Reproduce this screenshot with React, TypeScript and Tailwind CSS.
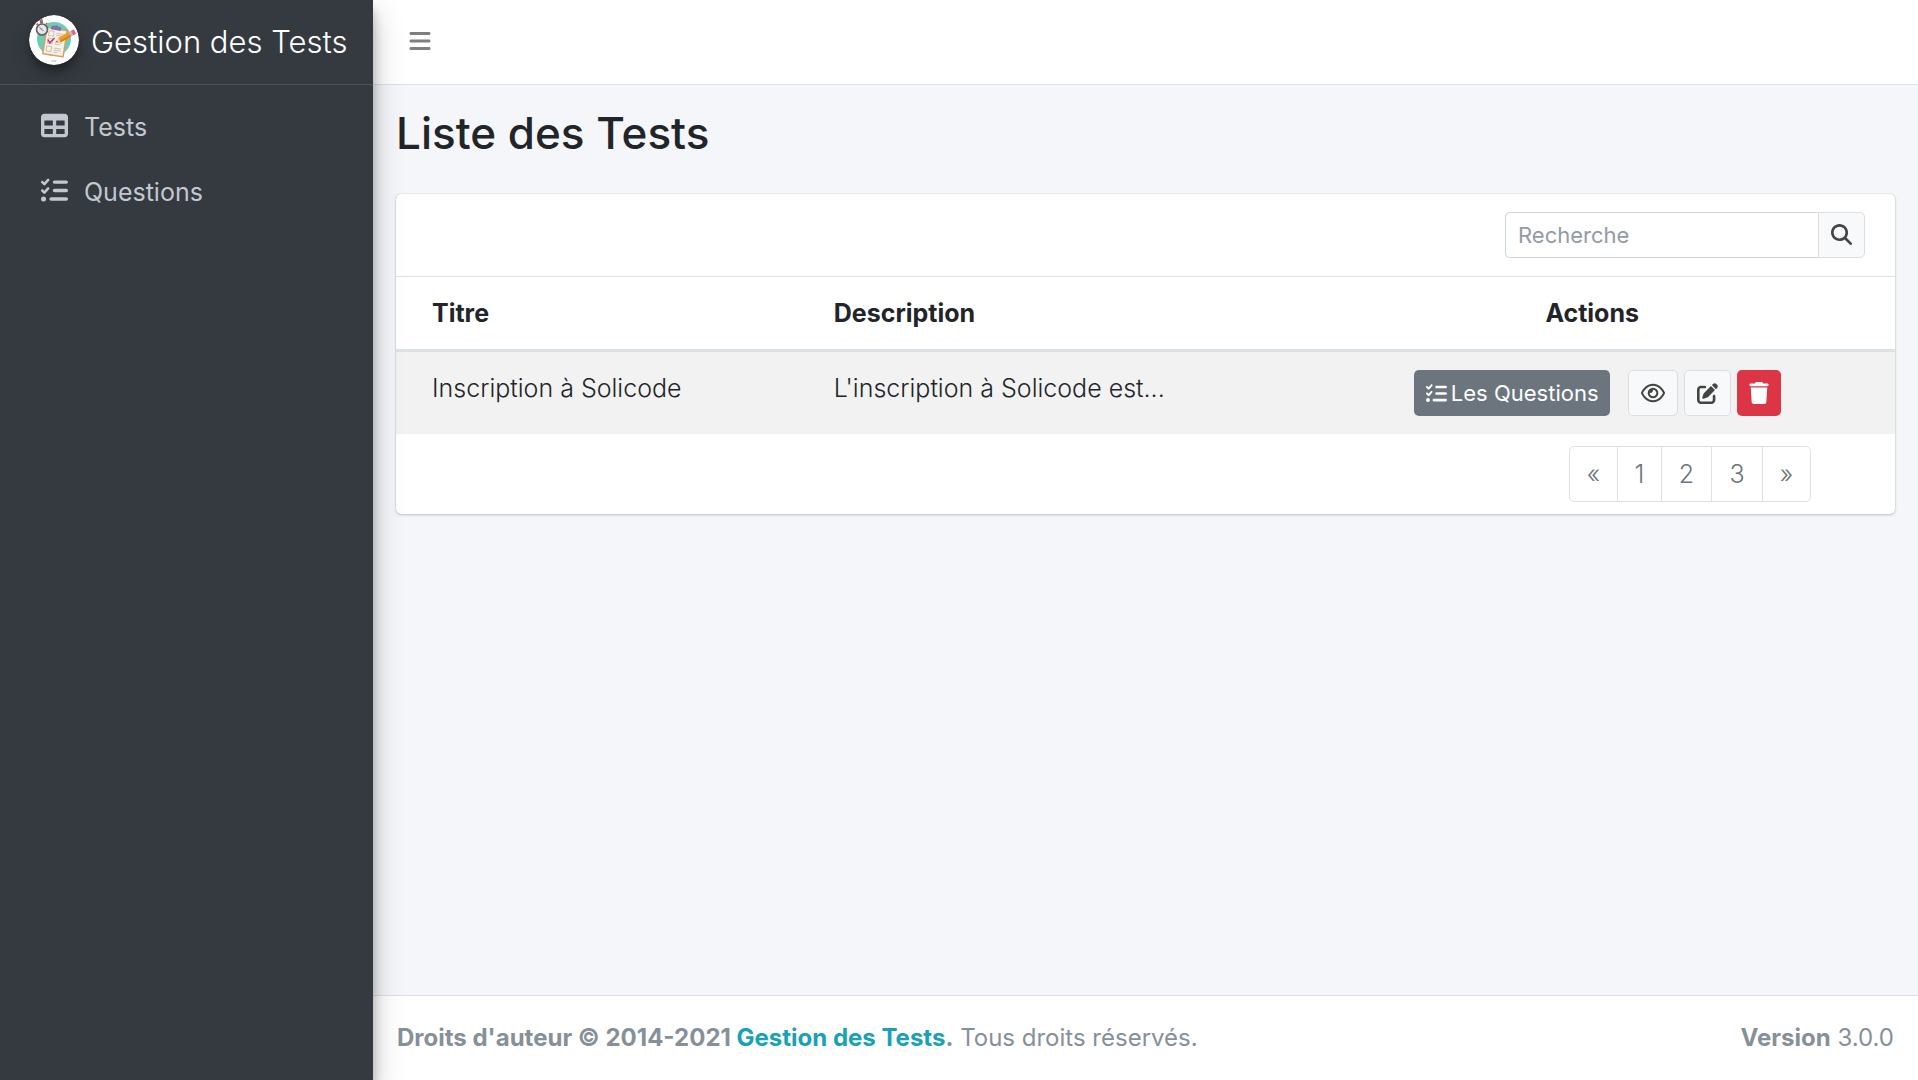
import {
  FaBars,
  FaListCheck,
  FaMagnifyingGlass,
  FaPenToSquare,
  FaRegEye,
  FaTable,
  FaTrash,
} from "react-icons/fa6";

function Logo() {
  return (
    <svg viewBox="0 0 50 50" className="mb-1 size-[50px] shrink-0 rounded-full shadow-[0_10px_20px_rgba(0,0,0,0.19),0_6px_6px_rgba(0,0,0,0.23)]" aria-hidden="true">
      <circle cx="25" cy="25" r="25" fill="#fff" />
      <circle cx="25" cy="24" r="17" fill="#6bcdb9" />
      <g transform="rotate(9 25 27)">
        <rect x="15" y="13" width="22" height="28" rx="1" fill="#d9a066" />
        <rect x="16.5" y="14.5" width="19" height="25" fill="#fbf1e6" />
        <path d="M20 15v-2.500q0-1.500 2-1.500h1.500q1.500-2 3 0H28q2 0 2 1.500V15z" fill="#7b74ad" />
        <g fill="none" stroke="#b9b0a6" strokeWidth="0.700">
          <rect x="18.500" y="16.500" width="5" height="5" />
          <rect x="18.500" y="24" width="5" height="5" />
          <rect x="18.500" y="32" width="5" height="5" />
          <path d="M26 18h7M26 20h5M26 27h7M26 29h5M26 33h7M26 35h7M26 37h4" />
        </g>
        <path d="m18.500 25.500 2.500 3 4-5.500" fill="none" stroke="#d8256b" strokeWidth="1.400" />
      </g>
      <g transform="translate(27 27) rotate(-29)">
        <path d="m0 0 4-2.600v5.200z" fill="#f6cfa0" />
        <path d="m0 0 1.500-1v2z" fill="#a33b5c" />
        <rect x="4" y="-2.600" width="12" height="5.200" fill="#f59a23" />
        <rect x="4" y="0.800" width="12" height="1.800" fill="#dd7d12" />
        <rect x="16" y="-2.600" width="2.200" height="5.200" fill="#b7bcc4" />
        <rect x="18.200" y="-2.600" width="3.500" height="5.200" rx="1" fill="#e0628f" />
      </g>
      <rect x="11" y="5.500" width="3" height="3" fill="#777" transform="rotate(-10 12 7)" />
      <path d="m7.500 10 1.500-1.500M17 8l1 1" stroke="#d9503f" strokeWidth="1.600" />
      <path d="m10.500 5.500 3-1" stroke="#d9503f" strokeWidth="1.400" />
      <circle cx="13" cy="14.500" r="5.500" fill="#e4e5e6" stroke="#5c5f63" strokeWidth="1.600" />
      <path d="m10.500 12.500 2.500 2 1.500 1.500" fill="none" stroke="#444" strokeWidth="0.800" />
      <path d="M22.500 46h5" stroke="#c4c4c4" strokeWidth="1.400" strokeDasharray="1.300 0.400" />
    </svg>
  );
}

const lightButton =
  "flex h-[46px] items-center justify-center rounded-[5px] border border-[#ddd] bg-[#f8f9fa] text-[#444]";

export default function App() {
  return (
    <div className="flex min-h-screen bg-[#f4f6f9] font-['Inter','Liberation_Sans',sans-serif] text-[25px] leading-9 font-light text-[#212529]">
      <aside className="relative z-10 w-[373px] shrink-0 bg-[#343a40] shadow-[0_14px_28px_rgba(0,0,0,0.25),0_10px_10px_rgba(0,0,0,0.22)]">
        <a href="#accueil" className="flex h-[85px] items-center gap-3 border-b border-[#4b545c] pl-[29px] text-[31px] font-light whitespace-nowrap text-white">
          <Logo />
          <span>Gestion des Tests</span>
        </a>
        <nav className="flex flex-col gap-[5px] px-3 pt-3 text-[#c2c7d0]">
          <a href="#tests" className="flex h-[60px] items-center gap-4 pl-[29px] font-normal">
            <FaTable className="mb-1 size-[27px]" />
            <span>Tests</span>
          </a>
          <a href="#questions" className="flex h-[60px] items-center gap-4 pl-[29px] font-normal">
            <FaListCheck className="mb-1 size-[27px]" />
            <span>Questions</span>
          </a>
        </nav>
      </aside>

      <div className="flex min-w-0 flex-1 flex-col">
        <header className="flex h-[85px] items-center border-b border-[#dee2e6] bg-white pb-0.5 pl-[35px]">
          <button type="button" aria-label="Menu" className="text-[#7f7f7f]">
            <FaBars className="size-6" />
          </button>
        </header>

        <main className="flex-1 px-[23px]">
          <h1 className="pt-[21px] pb-[34px] text-[44px] leading-[54px] font-medium">Liste des Tests</h1>

          <section className="rounded-[5px] bg-white shadow-[0_0_1px_rgba(0,0,0,0.25),0_1px_3px_rgba(0,0,0,0.2)]">
            <div className="flex h-[83px] items-center justify-end border-b border-[#dfdfdf] pr-[30px]">
              <form className="flex h-[46px] w-[360px]">
                <input
                  type="text"
                  aria-label="Recherche"
                  placeholder="Recherche"
                  className="min-w-0 flex-1 rounded-l-[5px] border border-r-0 border-[#ced4da] bg-white px-3 text-[22px] font-normal placeholder:text-[#939ba2]"
                />
                <button type="button" aria-label="Rechercher" className="flex w-[47px] items-center justify-center rounded-r-[5px] border border-[#ddd] bg-[#f8f9fa] pb-0.5 text-[#444]">
                  <FaMagnifyingGlass className="size-[21px]" />
                </button>
              </form>
            </div>

            <table className="w-full table-fixed text-left">
              <colgroup>
                <col className="w-[26.8%]" />
                <col className="w-[32.8%]" />
                <col />
              </colgroup>
              <thead>
                <tr className="border-b-3 border-[#dee2e6]">
                  <th className="px-9 py-[18px] font-bold">Titre</th>
                  <th className="px-9 py-[18px] font-bold">Description</th>
                  <th className="py-[18px] text-center font-bold">Actions</th>
                </tr>
              </thead>
              <tbody>
                <tr className="bg-[#f2f2f2]">
                  <td className="px-9 py-[18px] align-top">Inscription à Solicode</td>
                  <td className="px-9 py-[18px] align-top">L'inscription à Solicode est...</td>
                  <td className="py-[18px] pl-[11px]">
                    <div className="flex justify-center text-[22px] font-normal">
                      <button type="button" className="mr-[18px] flex h-[46px] w-[196px] items-center justify-center gap-1 rounded-[5px] bg-[#6c757d] whitespace-nowrap text-white">
                        <FaListCheck className="size-[21px] shrink-0" />
                        Les Questions
                      </button>
                      <div className="flex gap-[6px]">
                        <button type="button" aria-label="Voir" className={lightButton + " w-[50px]"}>
                          <FaRegEye className="size-6" />
                        </button>
                        <button type="button" aria-label="Modifier" className={lightButton + " w-[47px]"}>
                          <FaPenToSquare className="size-[21px]" />
                        </button>
                        <button type="button" aria-label="Supprimer" className="flex h-[46px] w-11 items-center justify-center rounded-[5px] bg-[#dc3545] text-white">
                          <FaTrash className="size-[22px]" />
                        </button>
                      </div>
                    </div>
                  </td>
                </tr>
              </tbody>
            </table>

            <nav aria-label="Pagination" className="flex justify-end py-3 pr-[84px]">
              <div className="flex h-14 divide-x divide-[#dee2e6] rounded-[5px] border border-[#dee2e6] text-[#6c757d]">
                <button type="button" aria-label="Précédent" className="w-12">«</button>
                <button type="button" className="w-11">1</button>
                <button type="button" className="w-[50px]">2</button>
                <button type="button" className="w-[51px]">3</button>
                <button type="button" aria-label="Suivant" className="w-[47px]">»</button>
              </div>
            </nav>
          </section>
        </main>

        <footer className="flex h-[85px] items-center justify-between border-t border-[#dee2e6] bg-white px-6 text-[24px] font-normal text-[#869099]">
          <p>
            <strong className="font-bold">
              Droits d'auteur © 2014-2021 <a href="#accueil" className="text-[#17a2b8]">Gestion des Tests</a>.
            </strong>{" "}
            Tous droits réservés.
          </p>
          <p>
            <b className="font-bold">Version</b> 3.0.0
          </p>
        </footer>
      </div>
    </div>
  );
}
